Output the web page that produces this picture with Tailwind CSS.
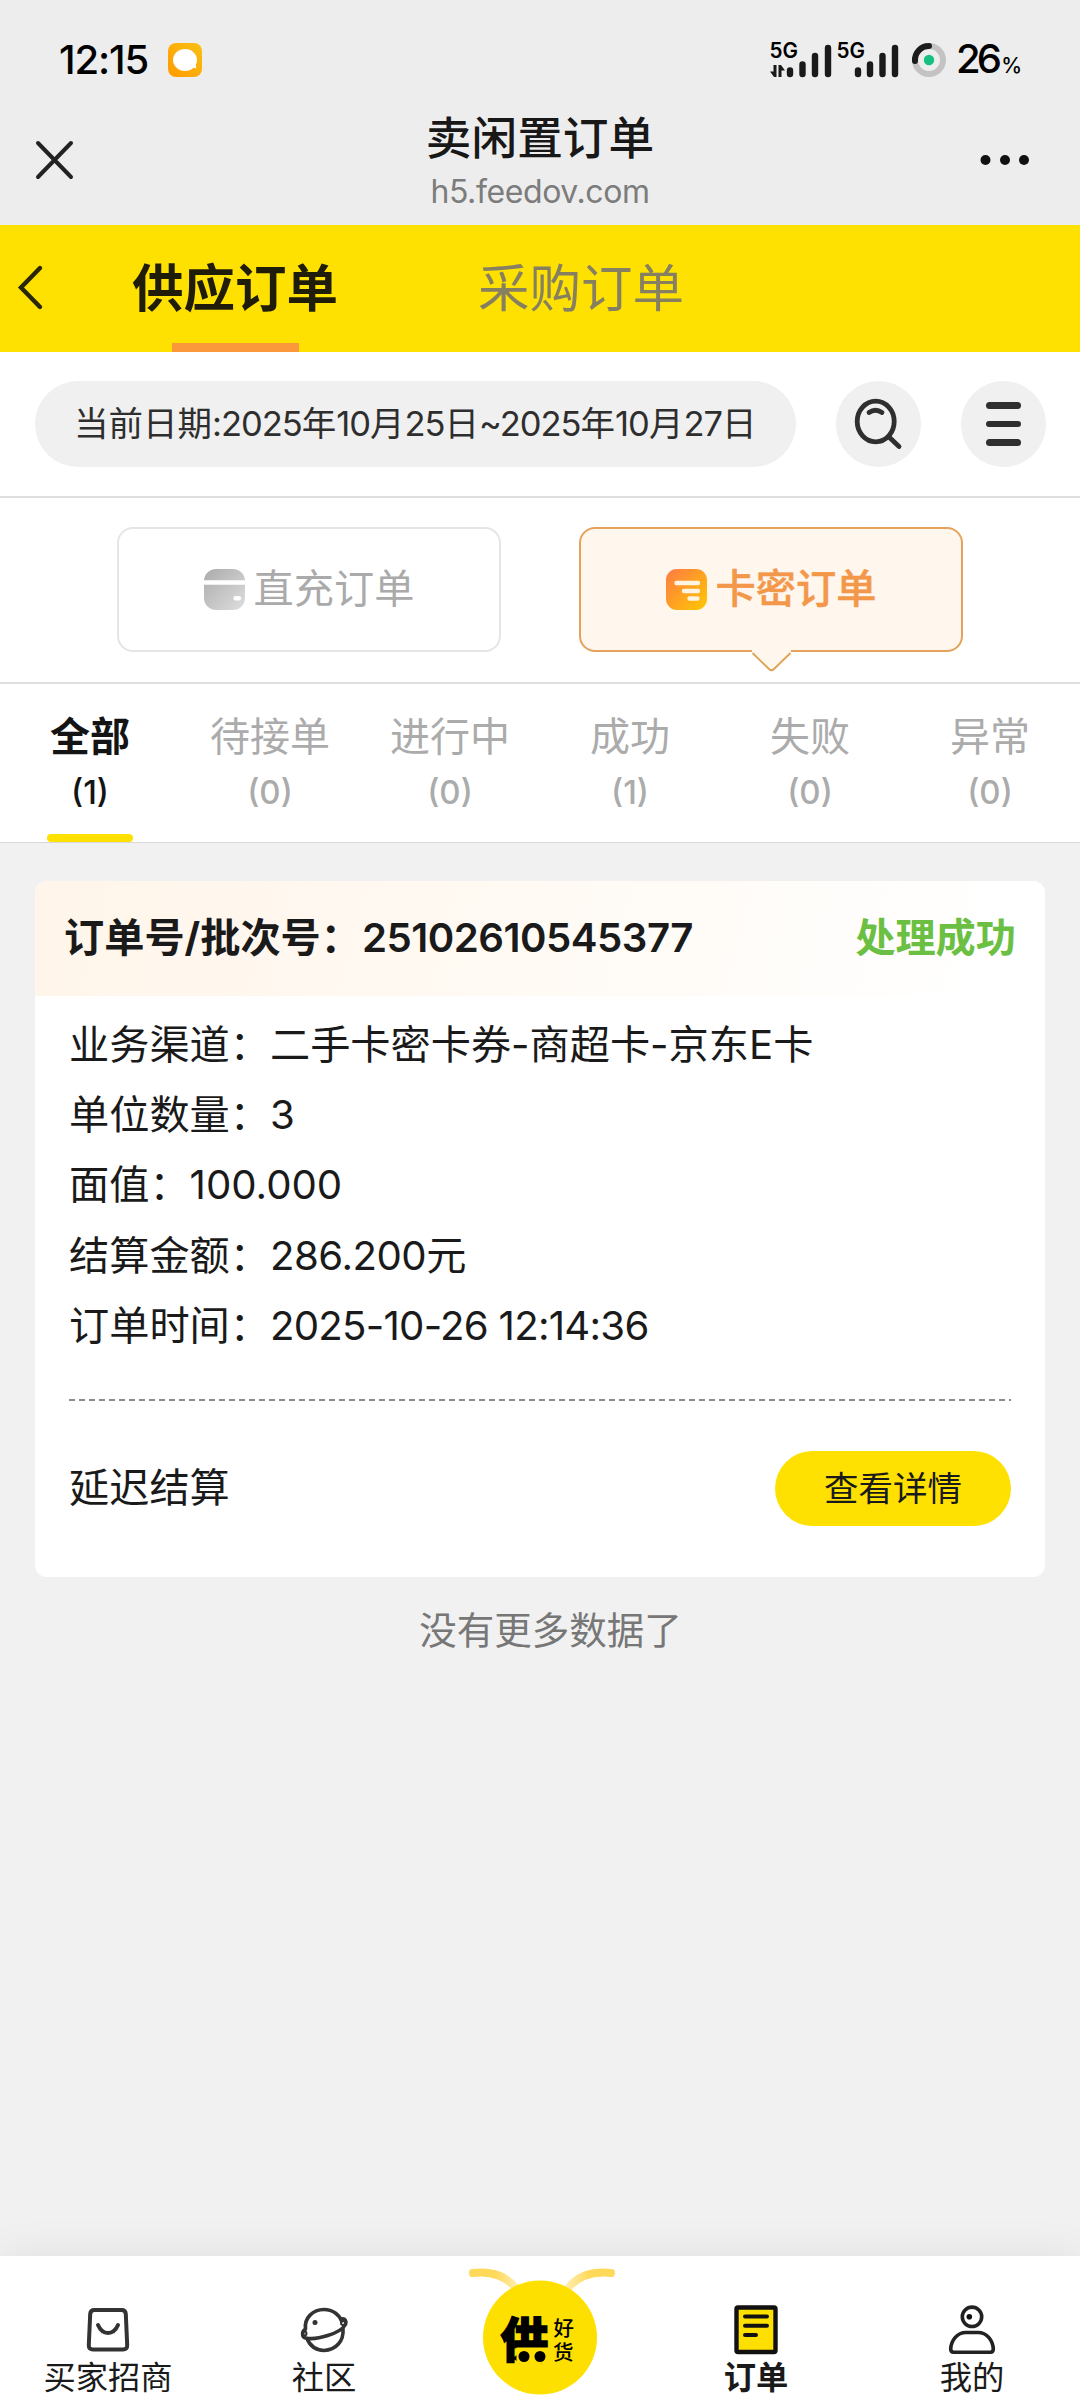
<!DOCTYPE html>
<html lang="zh-CN">
<head>
<meta charset="utf-8">
<title>卖闲置订单</title>
<script src="https://cdn.jsdelivr.net/npm/@tailwindcss/browser@4"></script>
</head>
<body class="w-[1080px] h-[2400px] overflow-hidden bg-[#f1f1f1] font-['Inter','Noto_Sans_CJK_SC',sans-serif] text-[#1a1a1a] flex flex-col">

<!-- status bar -->
<div class="h-[98px] shrink-0 bg-[#ededed] flex items-center justify-between pl-[59px] pr-[59px] pt-[22px] text-black">
  <div class="flex items-center gap-[19px]">
    <span class="text-[40px] leading-[40px] font-medium tracking-[-1.1px] w-[90px] whitespace-nowrap">12:15</span>
    <svg width="34" height="34" viewBox="0 0 34 34">
      <defs><linearGradient id="app" x1="1" y1="0" x2="0" y2="1"><stop offset="0" stop-color="#f8c112"/><stop offset="1" stop-color="#ff9a00"/></linearGradient></defs>
      <rect width="34" height="34" rx="8" fill="url(#app)"/>
      <ellipse cx="17" cy="17" rx="12" ry="11" fill="#fff"/>
      <path d="M23 24l5.5 1.5L27 20z" fill="#fff"/>
    </svg>
  </div>
  <div class="flex items-center">
    <svg class="font-semibold" width="180" height="58" viewBox="768 31 180 58">
      <text x="769.5" y="58.3" font-size="21" textLength="28.5" lengthAdjust="spacingAndGlyphs">5G</text>
      <text x="836.5" y="58.3" font-size="21" textLength="28.5" lengthAdjust="spacingAndGlyphs">5G</text>
      <g stroke="#1a1a1a" stroke-width="6.4" stroke-linecap="round">
        <path d="M790 70.500v3.500M802.500 64.500v9.500M815 56v18M828 48v26M858 70.500v3.500M870 64.500v9.500M882.500 56v18M895 48v26"/>
      </g>
      <g fill="#1a1a1a"><path d="M773.500 65h3v12h-2.500l-4-5.500h3.500zM778.500 77v-12h2.500l4 5.500h-3.500v6.500z"/></g>
      <circle cx="929" cy="60" r="14" fill="none" stroke="#c4c2c2" stroke-width="6"/>
      <path d="M929 46A14 14 0 0 0 915 61" fill="none" stroke="#1c1c1c" stroke-width="6" stroke-linecap="round"/>
      <circle cx="929" cy="60" r="5.200" fill="#16c080"/>
    </svg>
    <div class="flex items-baseline pl-[8px] w-[73px] whitespace-nowrap">
      <span class="text-[40px] leading-[40px] font-medium tracking-[-3.8px]">26</span><span class="text-[21px] font-medium pl-[3px]">%</span>
    </div>
  </div>
</div>

<!-- browser title bar -->
<div class="h-[127px] shrink-0 bg-[#ededed] grid grid-cols-[1fr_auto_1fr] items-start px-[34px]">
  <svg class="mt-[41px]" width="41" height="41" viewBox="0 0 41 41"><path d="M4 4l33 34M37 4L4 38" stroke="#222" stroke-width="4" stroke-linecap="round"/></svg>
  <div class="flex flex-col items-center pt-[16px]">
    <div class="text-[45.700px] leading-[50px] font-medium text-[#181818]">卖闲置订单</div>
    <div class="text-[32px] leading-[36px] mt-[10px] tracking-[-0.4px] text-[#7c7c7c]">h5.feedov.com</div>
  </div>
  <svg class="mt-[52px] mr-[16px] justify-self-end" width="50" height="20" viewBox="0 0 50 20"><g fill="#111"><circle cx="5.500" cy="10" r="5"/><circle cx="25" cy="10" r="5"/><circle cx="44" cy="10" r="5"/></g></svg>
</div>

<!-- order side tabs -->
<div class="h-[127px] shrink-0 bg-[#fee100] flex">
  <svg class="mt-[38px] ml-[14px]" width="32" height="48" viewBox="0 0 32 48"><path d="M26 5L7 24.500L26 44" fill="none" stroke="#2a2608" stroke-width="4.400" stroke-linecap="round"/></svg>
  <div class="ml-[16px] w-[346px] flex flex-col items-center justify-between">
    <span class="text-[51.5px] leading-[127px] h-[118px] font-bold text-[#1f1c0a]">供应订单</span>
    <span class="w-[127px] h-[9px] bg-[#fb983c]"></span>
  </div>
  <div class="w-[346px] text-center text-[51.5px] leading-[127px] text-[#868061]">采购订单</div>
</div>

<!-- date filter -->
<div class="h-[146px] shrink-0 bg-white border-b-2 border-[#dedede] flex items-center pl-[35px] pr-[34px]">
  <div class="w-[761px] h-[86px] rounded-full bg-[#f0f0f0] flex items-center pl-[39px] text-[34.5px] text-[#2e2e2e] whitespace-nowrap"><span>当前日期</span><span class="tracking-[-1px]">:2025</span><span>年</span><span class="tracking-[-1px]">10</span><span>月</span><span class="tracking-[-1px]">25</span><span>日</span><span class="tracking-[-1px]">~2025</span><span>年</span><span class="tracking-[-1px]">10</span><span>月</span><span class="tracking-[-1px]">27</span><span>日</span></div>
  <div class="ml-[40px] w-[85px] h-[86px] rounded-full bg-[#f0f0f0]">
    <svg width="85" height="86" viewBox="836 381 85 86" fill="none" stroke="#2f2f2f" stroke-width="4.800" stroke-linecap="round"><ellipse cx="875.700" cy="421.500" rx="18.500" ry="20.300"/><path d="M889 437l10 9.500"/><path d="M869 412.500q6.500-4.500 13 0"/></svg>
  </div>
  <div class="ml-[40px] w-[85px] h-[86px] rounded-full bg-[#f0f0f0] flex flex-col items-center justify-center gap-[12px]">
    <span class="w-[35px] h-[6.500px] rounded-full bg-[#2f2f2f]"></span><span class="w-[35px] h-[6.500px] rounded-full bg-[#2f2f2f]"></span><span class="w-[35px] h-[6.500px] rounded-full bg-[#2f2f2f]"></span>
  </div>
</div>

<!-- order kind -->
<div class="h-[186px] shrink-0 bg-white border-b-2 border-[#dedede] flex justify-center gap-[78px] pt-[29px]">
  <div class="w-[384px] h-[125px] rounded-[16px] border-2 border-[#e5e5e5] flex items-center justify-center gap-[9px] text-[40.2px] text-[#aaa]">
    <svg width="41" height="41" viewBox="0 0 41 41">
      <defs><linearGradient id="gr" x1="0" y1="0" x2="1" y2="1"><stop offset="0" stop-color="#ababab"/><stop offset="1" stop-color="#dedede"/></linearGradient></defs>
      <rect width="41" height="41" rx="12" fill="url(#gr)"/><path d="M0 13.500h41" stroke="#fff" stroke-width="4.500"/><rect x="29.500" y="27" width="7.500" height="4.500" rx="2" fill="#fff"/>
    </svg>
    <span>直充订单</span>
  </div>
  <div class="relative w-[384px] h-[125px] rounded-[16px] border-2 border-[#e5a25a] bg-[#fff6ed] flex items-center justify-center gap-[9px] text-[40.2px] font-medium text-[#f3984a]">
    <svg width="41" height="41" viewBox="0 0 41 41">
      <defs><linearGradient id="og" x1="0" y1="0" x2="1" y2="1"><stop offset="0" stop-color="#ff7a45"/><stop offset="1" stop-color="#ffc800"/></linearGradient></defs>
      <rect width="41" height="41" rx="11" fill="url(#og)"/><path d="M10.500 14H32M18 22H32M23.500 29.500H31.500" stroke="#fff3e2" stroke-width="4.400" stroke-linecap="round"/>
    </svg>
    <span class="[-webkit-text-stroke:0.5px_#f3984a]">卡密订单</span>
    <svg class="absolute left-[169px] top-[119px]" width="44" height="26" viewBox="0 0 44 26"><path d="M2 0V4.500L19 21.500q2.500 2.500 5 0L41 4.500V0z" fill="#fff6ed"/><path d="M2.500 5L19 21q2.500 2.500 5 0L40.500 5" fill="none" stroke="#e0a356" stroke-width="1.800"/></svg>
  </div>
</div>

<!-- status filter -->
<div class="h-[159px] shrink-0 bg-white border-b border-[#d8d8d8] grid grid-cols-6 text-center text-[#ababab]">
  <div class="relative flex flex-col items-center pt-[28px] text-[#141414]"><span class="text-[40px] leading-[50px] font-bold">全部</span><span class="text-[33px] leading-[40px] mt-[10px] font-medium">(1)</span><i class="absolute bottom-0 w-[86px] h-[8px] rounded-full bg-[#fee100]"></i></div>
  <div class="flex flex-col items-center pt-[28px]"><span class="text-[40px] leading-[50px]">待接单</span><span class="text-[33px] leading-[40px] mt-[10px] font-medium">(0)</span></div>
  <div class="flex flex-col items-center pt-[28px]"><span class="text-[40px] leading-[50px]">进行中</span><span class="text-[33px] leading-[40px] mt-[10px] font-medium">(0)</span></div>
  <div class="flex flex-col items-center pt-[28px]"><span class="text-[40px] leading-[50px]">成功</span><span class="text-[33px] leading-[40px] mt-[10px] font-medium">(1)</span></div>
  <div class="flex flex-col items-center pt-[28px]"><span class="text-[40px] leading-[50px]">失败</span><span class="text-[33px] leading-[40px] mt-[10px] font-medium">(0)</span></div>
  <div class="flex flex-col items-center pt-[28px]"><span class="text-[40px] leading-[50px]">异常</span><span class="text-[33px] leading-[40px] mt-[10px] font-medium">(0)</span></div>
</div>

<!-- order card -->
<div class="mt-[38px] mx-[35px] h-[696px] shrink-0 rounded-[12px] bg-white overflow-hidden">
  <div class="h-[115px] px-[29px] flex items-center justify-between bg-[linear-gradient(105deg,#fff5ea_0%,#fffaf4_50%,#ffffff_95%)] text-[40.2px] font-bold">
    <div class="whitespace-nowrap flex"><span>订单号</span><span>/</span><span>批次号：</span><span class="tracking-[-0.500px] pl-px font-semibold">25102610545377</span></div>
    <span class="text-[#6bc043]">处理成功</span>
  </div>
  <div class="px-[34px] pt-[14px] text-[40.2px] leading-[70.200px] whitespace-nowrap">
    <div>业务渠道：二手卡密卡券-商超卡-京东E卡</div>
    <div>单位数量：3</div>
    <div>面值：<span>100.000</span></div>
    <div>结算金额：<span class="tracking-[-0.5px]">286.200</span>元</div>
    <div>订单时间：<span class="tracking-[-0.75px]">2025-10-26 12:14:36</span></div>
    <div class="mt-[38px] h-[2px] bg-[repeating-linear-gradient(90deg,#8c8c8c_0_6px,transparent_6px_10px)]"></div>
    <div class="mt-[50px] flex items-center justify-between">
      <span>延迟结算</span>
      <span class="w-[236px] h-[75px] rounded-full bg-[#fee100] text-center text-[34.500px] leading-[75px]">查看详情</span>
    </div>
  </div>
</div>
<div class="mt-[29px] text-center text-[37.500px] leading-[50px] text-[#777] pl-[21px]">没有更多数据了</div>

<!-- bottom navigation -->
<nav class="mt-auto h-[144px] shrink-0 bg-white shadow-[0_0_40px_rgba(0,0,0,0.08)] grid grid-cols-5 text-center text-[32.300px] leading-[40px]">
  <div class="flex flex-col items-center pt-[46px]">
    <svg width="54" height="56" viewBox="81 2302 54 56" fill="none" stroke="#333" stroke-width="4" stroke-linecap="round"><path d="M94.500 2310h27q4 0 4.300 4l1.400 31q.2 4.500-4.200 4.500h-30q-4.400 0-4.200-4.500l1.400-31q.3-4 4.300-4z"/><path d="M98 2325q3.500 8 10 8t10-8"/></svg>
    <span>买家招商</span>
  </div>
  <div class="flex flex-col items-center pt-[46px]">
    <svg width="54" height="56" viewBox="297 2302 54 56" fill="none" stroke="#333" stroke-width="3.600" stroke-linecap="round"><path d="M305.500 2329C304 2318 313 2309.500 324 2309.500C333 2309.500 339.500 2315 341.500 2321"/><path d="M307 2338.500C310 2346 316 2350 324 2350.500C336 2350 344 2341 343 2329"/><path d="M341.500 2319c3.500-1 5.500 2.500 4 5.500c-5 9-29 16-40 13.500c-3.500-1-4-6-.5-8.500"/><circle cx="343" cy="2323" r="2" stroke-width="2"/><circle cx="304.500" cy="2333.500" r="2" stroke-width="2"/><circle cx="315" cy="2322.500" r="2.500" fill="#333" stroke="none"/></svg>
    <span>社区</span>
  </div>
  <div class="flex justify-center pt-[8px]">
    <svg width="160" height="136" viewBox="460 2264 160 136">
      <defs>
        <linearGradient id="a1" x1="470" y1="0" x2="520" y2="0" gradientUnits="userSpaceOnUse"><stop offset=".5" stop-color="#ffd95a"/><stop offset="1" stop-color="#fff0b8"/></linearGradient>
        <linearGradient id="a2" x1="614" y1="0" x2="564" y2="0" gradientUnits="userSpaceOnUse"><stop offset=".5" stop-color="#ffd95a"/><stop offset="1" stop-color="#fff0b8"/></linearGradient>
      </defs>
      <path d="M473 2273C493 2271 506 2276 517 2289" fill="none" stroke="url(#a1)" stroke-width="8" stroke-linecap="round"/>
      <path d="M611 2273C591 2271 578 2276 567 2289" fill="none" stroke="url(#a2)" stroke-width="8" stroke-linecap="round"/>
      <circle cx="540" cy="2337.500" r="57" fill="#fee000"/>
      <g class="font-bold">
        <text x="501" y="2357" font-size="47" stroke="#000" stroke-width="2.500">供</text>
        <rect x="516.500" y="2347.500" width="34" height="16" fill="#fee000"/>
        <circle cx="524" cy="2356.500" r="5.500"/><circle cx="540" cy="2356.500" r="5.500"/>
      </g>
      <g font-size="20.500" class="font-medium"><text x="553.500" y="2335.500">好</text><text x="553" y="2360">货</text></g>
    </svg>
  </div>
  <div class="flex flex-col items-center pt-[46px] font-bold">
    <svg width="54" height="56" viewBox="729 2302 54 56"><rect x="736.500" y="2307.500" width="39" height="44.500" rx="1.500" fill="#fee000" stroke="#111" stroke-width="4.400"/><path d="M745 2316.500h22M745 2325.800h22M745 2335h11" stroke="#111" stroke-width="4" stroke-linecap="round"/></svg>
    <span>订单</span>
  </div>
  <div class="flex flex-col items-center pt-[46px]">
    <svg width="54" height="56" viewBox="945 2302 54 56" fill="none" stroke="#222" stroke-width="3.600"><circle cx="972" cy="2316.800" r="9.700"/><circle cx="969.300" cy="2316.800" r="2.800" fill="#111" stroke="none"/><path d="M966 2332.500h12c9 0 15 8 15.300 16.500q0 3.200-3 3.200h-36.600q-3 0-3-3.200C951 2340.500 957 2332.500 966 2332.500z"/></svg>
    <span>我的</span>
  </div>
</nav>
</body>
</html>
